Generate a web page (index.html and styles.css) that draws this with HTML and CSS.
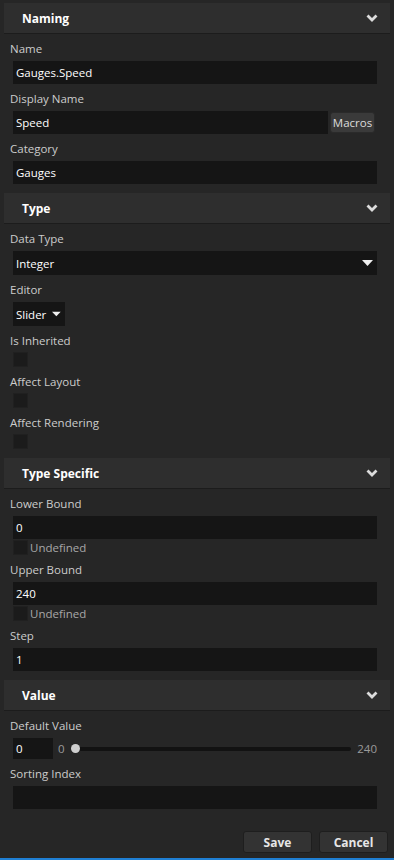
FILE: index.html
```html
<!DOCTYPE html>
<html lang="en">
<head>
    <meta charset="UTF-8">
    <title>Property Editor</title>
    <meta name="viewport" content="width=device-width, initial-scale=1.0">
    <link rel="stylesheet" href="styles.css">
</head>
<body>
<div class="panel">

    <div class="section-head">
        <span>Naming</span>
        <svg class="chevron" width="12" height="8" viewBox="0 0 12 8"><polyline points="1.5,1.5 6,6 10.5,1.5" /></svg>
    </div>
    <div class="section-body">
        <div class="field">
            <label>Name</label>
            <div class="input">Gauges.Speed</div>
        </div>
        <div class="field">
            <label>Display Name</label>
            <div class="input-row">
                <div class="input grow">Speed</div>
                <button class="small-btn">Macros</button>
            </div>
        </div>
        <div class="field">
            <label>Category</label>
            <div class="input">Gauges</div>
        </div>
    </div>

    <div class="section-head">
        <span>Type</span>
        <svg class="chevron" width="12" height="8" viewBox="0 0 12 8"><polyline points="1.5,1.5 6,6 10.5,1.5" /></svg>
    </div>
    <div class="section-body">
        <div class="field">
            <label>Data Type</label>
            <div class="select">
                <span>Integer</span>
                <svg class="caret" width="11" height="6" viewBox="0 0 11 6"><polygon points="0,0 11,0 5.5,6" /></svg>
            </div>
        </div>
        <div class="field">
            <label>Editor</label>
            <div class="select short">
                <span>Slider</span>
                <svg class="caret" width="11" height="6" viewBox="0 0 11 6"><polygon points="0,0 11,0 5.5,6" /></svg>
            </div>
        </div>
        <div class="field check-field">
            <label>Is Inherited</label>
            <div class="checkbox"></div>
        </div>
        <div class="field check-field">
            <label>Affect Layout</label>
            <div class="checkbox"></div>
        </div>
        <div class="field check-field">
            <label>Affect Rendering</label>
            <div class="checkbox"></div>
        </div>
    </div>

    <div class="section-head">
        <span>Type Specific</span>
        <svg class="chevron" width="12" height="8" viewBox="0 0 12 8"><polyline points="1.5,1.5 6,6 10.5,1.5" /></svg>
    </div>
    <div class="section-body">
        <div class="field">
            <label>Lower Bound</label>
            <div class="input">0</div>
            <div class="undefined"><div class="checkbox"></div><span>Undefined</span></div>
        </div>
        <div class="field">
            <label>Upper Bound</label>
            <div class="input">240</div>
            <div class="undefined"><div class="checkbox"></div><span>Undefined</span></div>
        </div>
        <div class="field">
            <label>Step</label>
            <div class="input">1</div>
        </div>
    </div>

    <div class="section-head">
        <span>Value</span>
        <svg class="chevron" width="12" height="8" viewBox="0 0 12 8"><polyline points="1.5,1.5 6,6 10.5,1.5" /></svg>
    </div>
    <div class="section-body">
        <div class="field">
            <label>Default Value</label>
            <div class="slider-row">
                <div class="input value-box">0</div>
                <span class="range-label">0</span>
                <div class="slider">
                    <div class="track"></div>
                    <div class="thumb"></div>
                </div>
                <span class="range-label">240</span>
            </div>
        </div>
        <div class="field">
            <label>Sorting Index</label>
            <div class="input"></div>
        </div>
    </div>

    <div class="footer">
        <button class="button">Save</button>
        <button class="button">Cancel</button>
    </div>
</div>
</body>
</html>
```

FILE: styles.css
```css
body, html {
    margin: 0;
    padding: 0;
    background-color: #262626;
    font-family: 'Open Sans', 'Noto Sans', sans-serif;
    font-size: 11.5px;
    color: #ffffff;
}
.panel {
    min-height: 100vh;
    box-sizing: border-box;
    padding-top: 3px;
    display: flex;
    flex-direction: column;
    border-bottom: 2px solid #1f7fd3;
}
.section-head {
    margin: 0 4px;
    height: 31px;
    box-sizing: border-box;
    display: flex;
    align-items: center;
    justify-content: space-between;
    padding: 0 12px 0 18px;
    background-color: #2e2e2e;
    border-bottom: 1px solid #1c1c1c;
    font-weight: 700;
    font-size: 12px;
    color: #ffffff;
}
.chevron polyline {
    fill: none;
    stroke: #dcdcdc;
    stroke-width: 2.8;
}
.section-body {
    padding: 0 17px 9px 10px;
}
.field {
    margin-top: 7px;
}
label {
    display: block;
    line-height: 16px;
    margin-bottom: 4px;
    color: #cccccc;
}
.check-field label {
    margin-bottom: 3px;
}
.input {
    margin-left: 3px;
    height: 23px;
    line-height: 23px;
    padding: 0 3px;
    background-color: #151515;
    color: #ffffff;
}
.input-row {
    display: flex;
    align-items: center;
    gap: 2px;
    margin-right: 2px;
}
.input.grow {
    flex: 1;
}
.small-btn {
    width: 45px;
    height: 21px;
    padding: 0;
    border: 1px solid #2a2a2a;
    border-radius: 3px;
    background-color: #3a3a3a;
    color: #dcdcdc;
    font-family: inherit;
    font-size: 11.5px;
}
.select {
    margin-left: 3px;
    height: 24px;
    display: flex;
    align-items: center;
    justify-content: space-between;
    padding: 0 4px 0 3px;
    background-color: #151515;
}
.select.short {
    display: inline-flex;
    width: 45px;
    gap: 6px;
}
.caret polygon {
    fill: #f0f0f0;
}
.checkbox {
    margin-left: 3px;
    width: 15px;
    height: 15px;
    box-sizing: border-box;
    background-color: #1b1b1b;
    border: 1px solid #202020;
}
.undefined {
    display: flex;
    align-items: center;
    margin-top: 1px;
    height: 15px;
    gap: 2px;
    color: #a8a8a8;
}
.slider-row {
    display: flex;
    align-items: center;
}
.value-box {
    width: 34px;
    height: 21px;
    line-height: 21px;
}
.range-label {
    color: #9a9a9a;
    margin-left: 5px;
}
.slider {
    flex: 1;
    position: relative;
    height: 10px;
    display: flex;
    align-items: center;
    margin: 0 1px 0 6px;
}
.track {
    flex: 1;
    height: 4px;
    border-radius: 2px;
    background-color: #121212;
}
.thumb {
    position: absolute;
    left: 0;
    top: 0;
    width: 9px;
    height: 9px;
    border-radius: 50%;
    background-color: #cfcfcf;
}
.footer {
    margin-top: auto;
    display: flex;
    justify-content: flex-end;
    gap: 7px;
    padding: 0 6px 5px 0;
}
.button {
    width: 69px;
    height: 22px;
    border: 1px solid #1e1e1e;
    border-radius: 3px;
    background-color: #333333;
    color: #e6e6e6;
    font-family: inherit;
    font-size: 12px;
    font-weight: 700;
}
```
